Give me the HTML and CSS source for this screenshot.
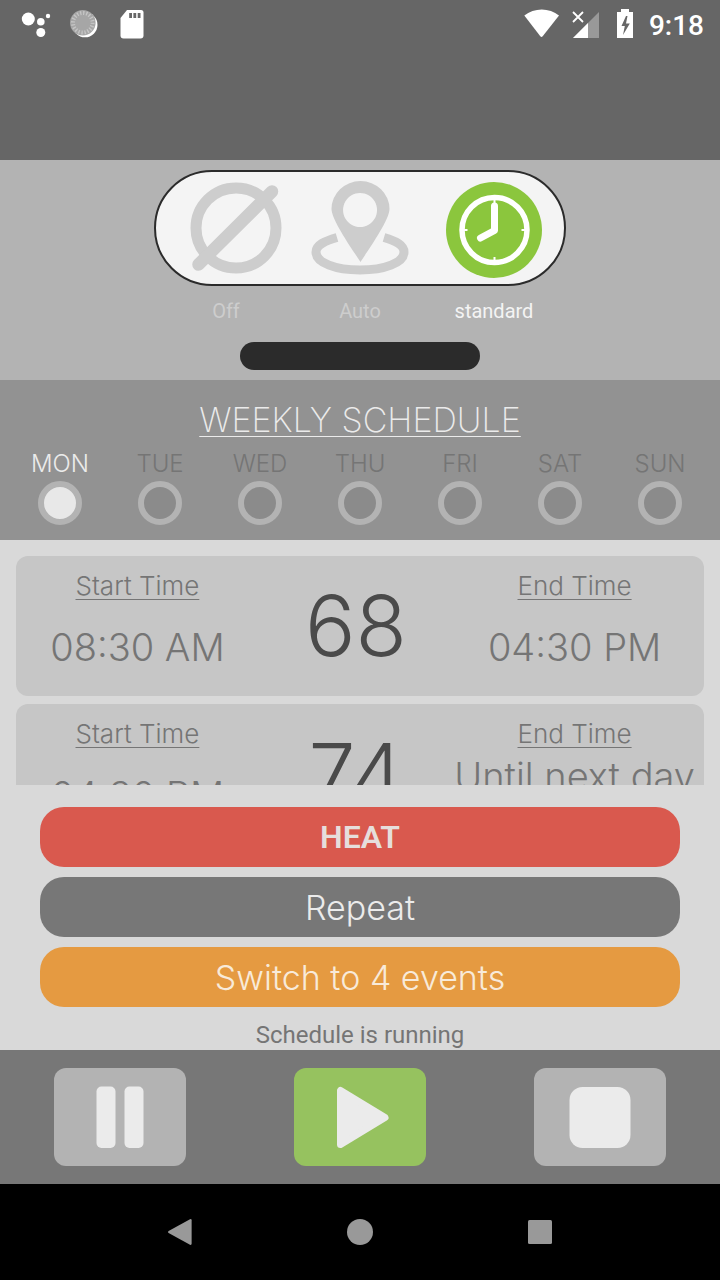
FILE: index.html
```html
<!DOCTYPE html>
<html lang="en">
<head>
<meta charset="utf-8">
<meta name="viewport" content="width=device-width, initial-scale=1">
<title>Weekly Schedule</title>
<link rel="stylesheet" href="styles.css">
</head>
<body>
<div class="app">
  <header class="top">
    <div class="status">
      <svg width="130" height="34" viewBox="20 7 130 34" aria-hidden="true">
        <g fill="#fff">
          <circle cx="28.300" cy="19" r="6.500"/><circle cx="40.800" cy="21.700" r="3.800"/><circle cx="48" cy="16" r="2.200"/><circle cx="40.800" cy="32.500" r="4.500"/>
          <circle cx="85" cy="24.800" r="12.500"/>
          <path d="M127 10h14a2.500 2.500 0 0 1 2.500 2.500v23a3 3 0 0 1-3 3h-17a3 3 0 0 1-3-3V18z"/>
        </g>
        <circle cx="82.800" cy="22.700" r="12.800" fill="#a6a6a6"/>
        <circle cx="82.800" cy="22.700" r="9.800" fill="none" stroke="#c6c6c6" stroke-width="4" stroke-dasharray="1.300 1.780"/>
        <path d="M129.200 13h2.800v5h-2.800zM133.400 13h2.800v5h-2.800zM137.700 13h2.800v5h-2.800z" fill="#666"/>
      </svg>
      <div class="status-right">
        <svg width="112" height="34" viewBox="523 7 112 34" aria-hidden="true">
          <path d="M524.300 15.500C534 7.500 549.500 7.500 559 15.500L542.700 36.300q-1.200 1.200-2.400 0z" fill="#fff"/>
          <path d="M573 38L599 12V38z" fill="#999"/>
          <path d="M573 38L588 23V38z" fill="#fff"/>
          <path d="M573 12l10 10M583 12l-10 10" stroke="#fff" stroke-width="1.800"/>
          <path d="M621 9h8v3h4v26h-16V12h4z" fill="#fff"/>
          <path d="M626 16l-4.500 10h3.300l-1.800 9 6.800-11.500h-3.800l1.500-7.500z" fill="#666"/>
        </svg>
        <time>9:18</time>
      </div>
    </div>
  </header>

  <section class="modes" aria-label="Mode">
    <div class="pill">
      <button type="button" class="mode" aria-labelledby="mode-off">
        <svg width="134" height="112" viewBox="159 172 134 112" fill="none" stroke="#cdcdcd" aria-hidden="true">
          <circle cx="236" cy="228" r="40" stroke-width="11"/>
          <path d="M198.500 264.500L272 191.500" stroke-width="12.500" stroke-linecap="round"/>
        </svg>
      </button>
      <button type="button" class="mode" aria-labelledby="mode-auto">
        <svg width="134" height="112" viewBox="293 172 134 112" aria-hidden="true">
          <path d="M360.500 262C357 256 331.500 221 331.500 209a29 28 0 0 1 58 0C389.500 221 364 256 360.500 262zM360 193a17 17 0 1 0 0.100 0z" fill="#cdcdcd" fill-rule="evenodd"/>
          <path d="M337 237.500C325 241 316 245 316 252c0 11 20 18 44 18s44-7 44-18c0-7-8-11-20-14.500" fill="none" stroke="#cdcdcd" stroke-width="9"/>
        </svg>
      </button>
      <button type="button" class="mode" aria-labelledby="mode-standard" aria-pressed="true">
        <svg width="134" height="112" viewBox="427 172 134 112" fill="none" stroke="#fff" aria-hidden="true">
          <circle cx="494" cy="230" r="48" fill="#8bc63d" stroke="none"/>
          <circle cx="494.500" cy="230" r="32.500" stroke-width="5.500"/>
          <path d="M494.500 206v24.500l-14 7.500" stroke-width="7" stroke-linecap="round" stroke-linejoin="round"/>
          <path d="M494.500 199v4M494.500 261v-4M463.500 230h4M525.500 230h-4" stroke-width="2"/>
        </svg>
      </button>
    </div>
    <div class="mode-names">
      <span id="mode-off">Off</span><span id="mode-auto">Auto</span><span id="mode-standard" class="on">standard</span>
    </div>
    <div class="handle"></div>
  </section>

  <section class="week">
    <h1>WEEKLY SCHEDULE</h1>
    <div class="days">
      <label class="day">MON<input type="radio" name="day" checked></label>
      <label class="day">TUE<input type="radio" name="day"></label>
      <label class="day">WED<input type="radio" name="day"></label>
      <label class="day">THU<input type="radio" name="day"></label>
      <label class="day">FRI<input type="radio" name="day"></label>
      <label class="day">SAT<input type="radio" name="day"></label>
      <label class="day">SUN<input type="radio" name="day"></label>
    </div>
  </section>

  <main class="events">
    <article class="event">
      <div class="slot"><h2>Start Time</h2><p>08:30 AM</p></div>
      <div class="temp">68</div>
      <div class="slot"><h2>End Time</h2><p>04:30 PM</p></div>
    </article>
    <article class="event">
      <div class="slot"><h2>Start Time</h2><p>04:30 PM</p></div>
      <div class="temp">74</div>
      <div class="slot"><h2>End Time</h2><p class="long">Until next day</p></div>
    </article>
  </main>

  <section class="actions">
    <button type="button" class="action heat">HEAT</button>
    <button type="button" class="action repeat">Repeat</button>
    <button type="button" class="action switch">Switch to 4 events</button>
    <p class="state">Schedule is running</p>
  </section>

  <footer class="player">
    <button type="button" class="control" aria-label="Pause">
      <svg width="64" height="64" viewBox="0 0 64 64" fill="#ebebeb" aria-hidden="true"><rect x="8.500" y="1.500" width="19" height="61.500" rx="5"/><rect x="36.500" y="1.500" width="19" height="61.500" rx="5"/></svg>
    </button>
    <button type="button" class="control play" aria-label="Play">
      <svg width="64" height="64" viewBox="0 0 64 64" fill="#ebebeb" stroke="#ebebeb" stroke-width="7" stroke-linejoin="round" aria-hidden="true"><path d="M12.500 5.500v54L57 32.500z"/></svg>
    </button>
    <button type="button" class="control" aria-label="Stop">
      <svg width="64" height="64" viewBox="0 0 64 64" fill="#ebebeb" aria-hidden="true"><rect x="1.500" y="2" width="61" height="61" rx="13"/></svg>
    </button>
  </footer>

  <nav class="system">
    <button type="button" aria-label="Back"><svg width="28" height="28" viewBox="0 0 28 28" fill="#999" aria-hidden="true"><path d="M2.600 13L24 1.200q1.600-.6 1.600 1v23.600q0 1.600-1.600 1L2.600 15q-1.400-1 0-2z"/></svg></button>
    <button type="button" aria-label="Home"><svg width="28" height="28" viewBox="0 0 28 28" fill="#999" aria-hidden="true"><circle cx="14" cy="14" r="13"/></svg></button>
    <button type="button" aria-label="Recent apps"><svg width="28" height="28" viewBox="0 0 28 28" fill="#999" aria-hidden="true"><rect x="2" y="2" width="24" height="24" rx="1.500"/></svg></button>
  </nav>
</div>
</body>
</html>
```

FILE: styles.css
```css
* {
  box-sizing: border-box;
}

body,
h1,
h2,
p {
  margin: 0;
  font-weight: inherit;
}

button {
  padding: 0;
  border: 0;
  background: none;
  font: inherit;
  color: inherit;
}

svg {
  display: block;
}

.app {
  display: flex;
  flex-direction: column;
  height: 100vh;
  background: #d9d9d9;
  color: #757575;
  font-family: Inter, "Open Sans", sans-serif;
  font-weight: 300;
}

.app > * {
  flex: none;
}

.top {
  height: 160px;
  background: #666;
}

.status {
  display: flex;
  justify-content: space-between;
  align-items: center;
  height: 48px;
  padding: 0 16px 0 20px;
}

.status-right {
  display: flex;
  align-items: center;
  gap: 14px;
  color: #fff;
  font: 500 28px/34px Roboto, sans-serif;
}

.status-right time {
  padding-top: 3px;
}

.modes {
  display: flex;
  flex-direction: column;
  align-items: center;
  padding: 10px 0;
  background: #b3b3b3;
}

.pill {
  display: flex;
  padding: 0 3px;
  border: 2px solid #2b2b2b;
  border-radius: 58px;
  background: #f4f4f4;
}

.mode-names {
  display: flex;
  padding: 10px 0 16px;
  color: #cdcdcd;
  font: 400 20px/30px Roboto, sans-serif;
}

.mode-names span {
  width: 134px;
  text-align: center;
}

.mode-names .on {
  color: #f4f4f4;
}

.handle {
  width: 240px;
  height: 28px;
  border-radius: 14px;
  background: #2b2b2b;
}

.week {
  padding: 20px 10px 15px;
  background: #929292;
  text-align: center;
}

h1 {
  color: #ebebeb;
  font-size: 34px;
  font-weight: 200;
  line-height: 40px;
  text-decoration: underline;
  text-decoration-thickness: 1px;
  text-underline-offset: 4px;
}

.days {
  display: grid;
  grid-template-columns: repeat(7, 1fr);
  padding-top: 9px;
}

.day {
  display: flex;
  flex-direction: column;
  align-items: center;
  gap: 2px;
  color: #757575;
  font-size: 24px;
  line-height: 30px;
}

.day:has(input:checked) {
  color: #ebebeb;
}

.day input {
  appearance: none;
  width: 44px;
  height: 44px;
  margin: 0;
  border: 6px solid #b3b3b3;
  border-radius: 50%;
  background: #8b8b8b;
}

.day input:checked {
  background: #e8e8e8;
}

.app > .events {
  display: flex;
  flex: 1 1 0;
  flex-direction: column;
  gap: 8px;
  min-height: 0;
  padding: 16px 16px 0;
  overflow-y: auto;
  scrollbar-width: none;
}

.event {
  display: grid;
  flex: none;
  grid-template-columns: 5fr 4fr 5fr;
  height: 140px;
  padding-right: 8px;
  border-radius: 12px;
  background: #c6c6c6;
}

.slot {
  display: flex;
  flex-direction: column;
  align-items: center;
  padding-top: 15px;
  white-space: nowrap;
}

h2 {
  font-size: 26px;
  line-height: 30px;
  text-decoration: underline;
  text-decoration-thickness: 1px;
  text-underline-offset: 4px;
}

.slot p {
  padding-top: 26px;
  font-size: 38px;
  line-height: 40px;
}

.slot .long {
  padding-top: 7px;
}

.temp {
  align-self: center;
  color: #4a4a4a;
  font-size: 84px;
  line-height: 84px;
  text-align: center;
}

.actions {
  display: flex;
  flex-direction: column;
  gap: 10px;
  padding: 22px 40px 0;
}

.action {
  height: 60px;
  border-radius: 24px;
  color: #ebebeb;
  font-size: 34px;
}

.heat {
  background: #d9594e;
  color: #e6dedc;
  font-family: Roboto, sans-serif;
  font-size: 32px;
  font-weight: 600;
}

.repeat {
  background: #777;
}

.switch {
  background: #e59a41;
  color: #f8ead9;
}

.state {
  padding-top: 3px;
  font: 400 24px/30px Roboto, sans-serif;
  text-align: center;
}

.player {
  display: grid;
  grid-template-columns: repeat(3, 1fr);
  justify-items: center;
  padding: 18px 0;
  background: #777;
}

.control {
  display: grid;
  place-items: center;
  width: 132px;
  height: 98px;
  border-radius: 12px;
  background: #b3b3b3;
}

.play {
  background: #96c25f;
}

.system {
  display: flex;
  justify-content: center;
  align-items: center;
  gap: 152px;
  height: 96px;
  background: #000;
}
```
